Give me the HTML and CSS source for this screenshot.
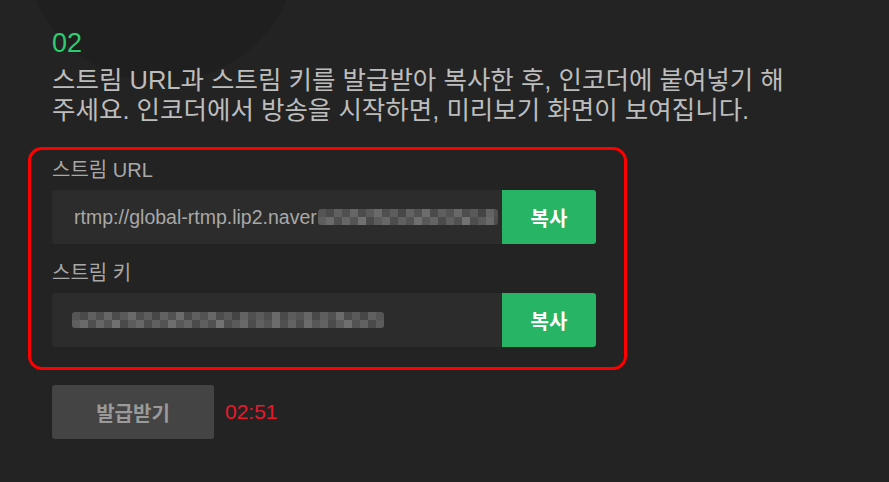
FILE: index.html
```html
<!DOCTYPE html>
<html lang="ko">
<head>
  <meta charset="UTF-8">
  <meta name="viewport" content="width=device-width, initial-scale=1.0">
  <title>스트림 키 발급</title>
  <link rel="stylesheet" href="styles.css">
</head>
<body>
  <div class="deco"></div>

  <div class="step">
    <div class="step-num">02</div>
    <p class="desc">스트림 URL과 스트림 키를 발급받아 복사한 후, 인코더에 붙여넣기 해<br>주세요. 인코더에서 방송을 시작하면, 미리보기 화면이 보여집니다.</p>

    <!-- highlighted area -->
    <div class="keys">
      <div class="field">
        <div class="field-label">스트림 URL</div>
        <div class="field-row">
          <div class="field-value">rtmp://global-rtmp.lip2.naver<span class="mosaic mosaic-url"></span></div>
          <button class="copy-btn">복사</button>
        </div>
      </div>
      <div class="field">
        <div class="field-label">스트림 키</div>
        <div class="field-row">
          <div class="field-value"><span class="mosaic mosaic-key"></span></div>
          <button class="copy-btn">복사</button>
        </div>
      </div>
    </div>

    <div class="issue">
      <button class="issue-btn">발급받기</button>
      <span class="timer">02:51</span>
    </div>
  </div>
</body>
</html>
```

FILE: styles.css
```css
body {
  margin: 0;
  background: #232323;
  font-family: "Liberation Sans", "Noto Sans CJK KR", sans-serif;
  overflow: hidden;
}
.deco {
  position: absolute;
  left: 24px;
  top: -192px;
  width: 274px;
  height: 274px;
  border-radius: 50%;
  background: #1f1f1f;
}
.step {
  position: relative;
  padding: 27px 0 0 52px;
}
.step-num {
  color: #2ecc71;
  font-size: 27px;
  line-height: 32px;
}
.desc {
  margin: 6px 0 0;
  color: #bdbdbd;
  font-size: 25.5px;
  line-height: 30px;
}
.keys {
  width: 544px;
  margin: 22px 0 0 -24px;
  padding: 8px 28px 20px 21px;
  border: 3px solid #ff0000;
  border-radius: 14px;
}
.field + .field {
  margin-top: 17px;
}
.field-label {
  color: #a8a8a8;
  font-size: 20px;
  line-height: 24px;
  margin-bottom: 8px;
}
.field-row {
  display: flex;
  height: 54px;
}
.field-value {
  flex: 1;
  display: flex;
  align-items: center;
  padding-left: 22px;
  background: #2c2c2c;
  border-radius: 3px 0 0 3px;
  color: #a8a8a8;
  font-size: 19.5px;
  white-space: nowrap;
  overflow: hidden;
}
.copy-btn {
  width: 94px;
  border: 0;
  border-radius: 0 3px 3px 0;
  background: #27b464;
  color: #fff;
  font-family: inherit;
  font-size: 20px;
  font-weight: bold;
}
.mosaic {
  display: inline-block;
  height: 16px;
  background:
    linear-gradient(90deg, #555 0 8px, #4a4a4a 8px 16px, #606060 16px 24px, #505050 24px 32px, #666 32px 40px, #4c4c4c 40px 48px, #5a5a5a 48px 56px, #6a6a6a 56px 64px, #4f4f4f 64px 72px, #5d5d5d 72px 80px, #474747 80px 88px, #626262 88px 96px, #525252 96px 104px, #6c6c6c 104px 112px, #4b4b4b 112px 120px, #5f5f5f 120px 128px, #535353 128px 136px, #686868 136px 144px, #4d4d4d 144px 152px, #595959 152px 160px, #444 160px 168px, #636363 168px 176px, #505050 176px 184px, #5b5b5b 184px 192px, #4e4e4e 192px 200px, #6a6a6a 200px 208px, #4a4a4a 208px 216px, #5c5c5c 216px 224px, #545454 224px 232px, #666 232px 240px, #494949 240px 248px, #5e5e5e 248px 256px, #515151 256px 264px, #6b6b6b 264px 272px, #4c4c4c 272px 280px, #5a5a5a 280px 288px, #474747 288px 296px, #606060 296px 304px, #555 304px 312px) top / 100% 8px no-repeat,
    linear-gradient(90deg, #5e5e5e 0 8px, #6a6a6a 8px 16px, #4f4f4f 16px 24px, #666 24px 32px, #555 32px 40px, #707070 40px 48px, #4a4a4a 48px 56px, #5c5c5c 56px 64px, #676767 64px 72px, #4d4d4d 72px 80px, #606060 80px 88px, #535353 88px 96px, #6e6e6e 96px 104px, #585858 104px 112px, #646464 112px 120px, #4b4b4b 120px 128px, #5f5f5f 128px 136px, #515151 136px 144px, #727272 144px 152px, #4e4e4e 152px 160px, #5a5a5a 160px 168px, #696969 168px 176px, #4c4c4c 176px 184px, #606060 184px 192px, #555 192px 200px, #6c6c6c 200px 208px, #505050 208px 216px, #636363 216px 224px, #4d4d4d 224px 232px, #6b6b6b 232px 240px, #575757 240px 248px, #626262 248px 256px, #4b4b4b 256px 264px, #5d5d5d 264px 272px, #6f6f6f 272px 280px, #535353 280px 288px, #616161 288px 296px, #4a4a4a 296px 304px, #5b5b5b 304px 312px) bottom / 100% 8px no-repeat;
  border-radius: 3px;
}
.mosaic-url {
  width: 180px;
  margin-left: 1px;
}
.mosaic-key {
  width: 312px;
  margin-left: -2px;
}
.issue {
  display: flex;
  align-items: center;
  gap: 11px;
  margin-top: 15px;
}
.issue-btn {
  width: 162px;
  height: 54px;
  border: 0;
  border-radius: 3px;
  background: #444;
  color: #9a9a9a;
  font-family: inherit;
  font-size: 20px;
  font-weight: bold;
}
.timer {
  color: #e8192c;
  font-size: 21px;
}
```
